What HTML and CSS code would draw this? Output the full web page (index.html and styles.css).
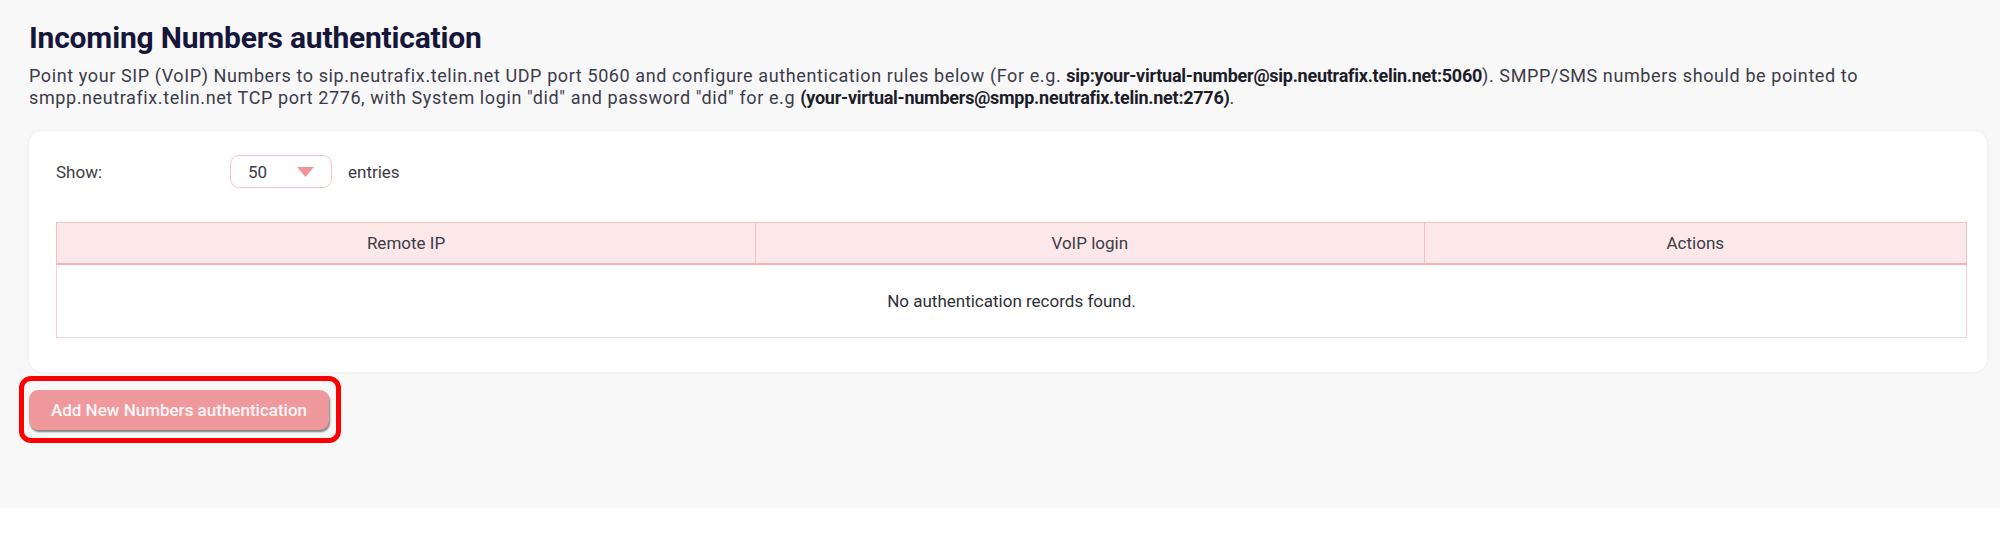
FILE: index.html
```html
<!DOCTYPE html>
<html lang="en">
<head>
<meta charset="utf-8">
<title>Incoming Numbers authentication</title>
<link rel="stylesheet" href="styles.css">
</head>
<body>
<main class="page">
  <h1 class="title">Incoming Numbers authentication</h1>
  <p class="intro">Point your SIP (VoIP) Numbers to sip.neutrafix.telin.net UDP port 5060 and configure authentication rules below (For e.g. <b>sip:your-virtual-number@sip.neutrafix.telin.net:5060</b>). SMPP/SMS numbers should be pointed to smpp.neutrafix.telin.net TCP port 2776, with System login "did" and password "did" for e.g <b>(your-virtual-numbers@smpp.neutrafix.telin.net:2776)</b>.</p>

  <section class="card">
    <div class="show-row">
      <span class="show-label">Show:</span>
      <div class="select">
        <span class="select-value">50</span>
        <svg class="caret" width="17" height="10" viewBox="0 0 17 10"><path d="M0 0 H17 L8.5 10 Z" fill="#f0959a"/></svg>
      </div>
      <span class="entries">entries</span>
    </div>

    <table class="grid">
      <thead>
        <tr>
          <th class="col-ip">Remote IP</th>
          <th class="col-login">VoIP login</th>
          <th class="col-actions">Actions</th>
        </tr>
      </thead>
      <tbody>
        <tr>
          <td colspan="3" class="empty">No authentication records found.</td>
        </tr>
      </tbody>
    </table>
  </section>

  <div class="action-wrap">
    <button class="add-btn" type="button">Add New Numbers authentication</button>
  </div>
</main>
</body>
</html>
```

FILE: styles.css
```css
* { box-sizing: border-box; }

html, body {
  margin: 0;
  padding: 0;
  background: #ffffff;
}

body {
  font-family: Roboto, "Liberation Sans", Arial, sans-serif;
  color: #3b3b45;
}

.page {
  background: #f8f8f8;
  padding: 20px 13px 78px 29px;
}

.title {
  margin: 0 0 9px 0;
  font-size: 30px;
  line-height: 36px;
  font-weight: 700;
  color: #15163a;
  letter-spacing: -0.2px;
}

.intro {
  margin: 0;
  font-size: 18px;
  line-height: 21.5px;
  letter-spacing: 0.6px;
  color: #3b3b4a;
}

.intro b {
  font-weight: 700;
  letter-spacing: -0.25px;
  color: #1d1d2a;
}

.card {
  margin-top: 23px;
  background: #ffffff;
  border-radius: 14px;
  box-shadow: 0 0 4px rgba(0, 0, 0, 0.06);
  padding: 24px 20px 34px 27px;
}

.show-row {
  display: flex;
  align-items: center;
  height: 33px;
  font-size: 17px;
  color: #3b3b45;
}

.show-label {
  width: 174px;
}

.select {
  width: 102px;
  height: 33px;
  border: 1.5px solid #f8c6c8;
  border-radius: 9px;
  display: flex;
  align-items: center;
  padding-left: 17px;
  background: #fff;
}

.select-value {
  width: 49px;
}

.caret {
  display: block;
}

.entries {
  margin-left: 16px;
}

.grid {
  margin-top: 34px;
  width: 100%;
  border-collapse: collapse;
  font-size: 17px;
}

.grid th {
  height: 41px;
  background: #fde8e9;
  border: 1.5px solid #f5c0c3;
  border-bottom: 2px solid #f3b3b6;
  font-weight: 400;
  color: #3b3b45;
  text-align: center;
  padding: 0;
}

.col-ip { width: 36.6%; }
.col-login { width: 35%; }
.col-actions { width: 28.4%; }

.grid td {
  height: 74px;
  border: 1.5px solid #f8d2d4;
  text-align: center;
  color: #2f2f3a;
  padding: 0;
}

.action-wrap {
  position: relative;
  margin-top: 18px;
  width: 300px;
}

.action-wrap::after {
  content: "";
  position: absolute;
  top: -14px;
  left: -10px;
  right: -12px;
  bottom: -13px;
  border: 5px solid #ff0000;
  border-radius: 12px;
  pointer-events: none;
}

.add-btn {
  display: block;
  width: 300px;
  height: 40px;
  border: none;
  border-radius: 9px;
  background: #f0999d;
  color: #fff6f6;
  font-family: Roboto, "Liberation Sans", Arial, sans-serif;
  font-size: 17px;
  font-weight: 500;
  box-shadow: 1px 2px 2px rgba(60, 60, 60, 0.65);
  padding: 0;
}
```
